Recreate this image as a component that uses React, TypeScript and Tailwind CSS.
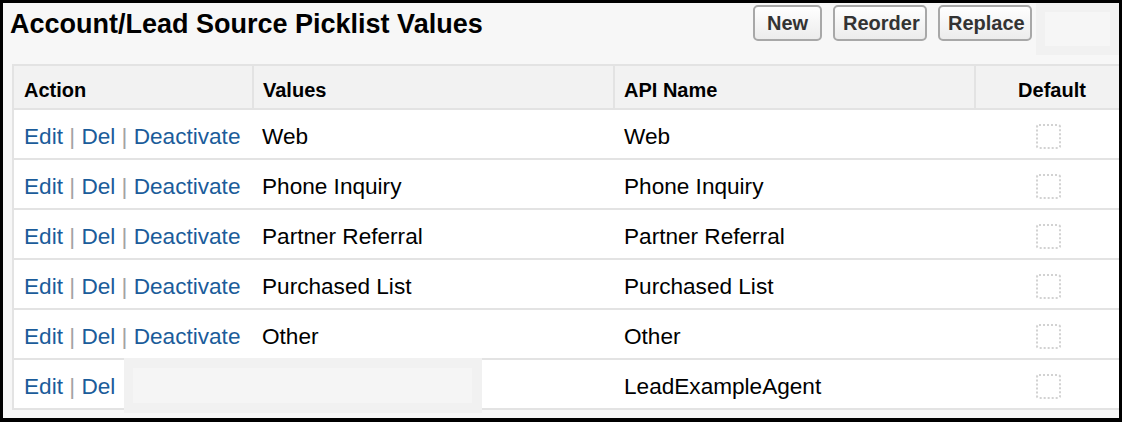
import React from "react";

type Row = { value: string; api: string; deact: boolean };

const rows: Row[] = [
  { value: "Web", api: "Web", deact: true },
  { value: "Phone Inquiry", api: "Phone Inquiry", deact: true },
  { value: "Partner Referral", api: "Partner Referral", deact: true },
  { value: "Purchased List", api: "Purchased List", deact: true },
  { value: "Other", api: "Other", deact: true },
  { value: "", api: "LeadExampleAgent", deact: false },
];

function Btn({ label, w }: { label: string; w: string }) {
  return (
    <button
      className={`${w} h-[36px] rounded-[5px] border-2 border-[#a8a8a8] bg-gradient-to-b from-white to-[#ececec] px-[8px] text-[20px] font-bold leading-none text-[#333]`}
    >
      {label}
    </button>
  );
}

function Sep() {
  return <span className="text-[#a3a3a3]"> | </span>;
}

export default function App() {
  return (
    <div className="relative h-[422px] w-[1122px] overflow-hidden border-t-[3px] border-l-[3px] border-r-[3px] border-b-[4px] border-black bg-[#f7f7f7] font-['Liberation_Sans',Arial,sans-serif] text-black">
      <div className="flex items-start justify-between pl-[7px] pr-[87px]">
        <h1 className="mt-[6px] text-[27px] font-bold leading-[30px]">
          Account/Lead Source Picklist Values
        </h1>
        <div className="mt-[2px] flex gap-[11px]">
          <Btn label="New" w="w-[69px]" />
          <Btn label="Reorder" w="w-[94px]" />
          <Btn label="Replace" w="w-[94px]" />
        </div>
      </div>

      <div className="ml-[9px] mt-[23px] w-[1110px] border-x-2 border-t-2 border-[#e3e3e3] bg-white">
        <div className="grid h-[44px] grid-cols-[240px_361px_361px_1fr] border-b-2 border-[#e3e3e3] bg-[#f2f2f2] text-[20px] font-bold">
          <div className="flex items-center border-r-2 border-[#e3e3e3] pl-[10px] pt-[6px]">Action</div>
          <div className="flex items-center border-r-2 border-[#e3e3e3] pl-[9px] pt-[6px]">Values</div>
          <div className="flex items-center border-r-2 border-[#e3e3e3] pl-[9px] pt-[6px]">API Name</div>
          <div className="flex items-center justify-center pl-[8px] pt-[6px]">Default</div>
        </div>
        {rows.map((r, i) => (
          <div
            key={i}
            className="grid h-[50px] grid-cols-[240px_361px_361px_1fr] border-b-2 border-[#e3e3e3] text-[22.6px]"
          >
            <div className="flex items-center whitespace-pre pl-[10px] pt-[6px] text-[#1b5c9a]">
              <span>Edit</span>
              <Sep />
              <span>Del</span>
              {r.deact && (
                <>
                  <Sep />
                  <span>Deactivate</span>
                </>
              )}
            </div>
            <div className="flex items-center pl-[8px] pt-[6px]">{r.value}</div>
            <div className="flex items-center pl-[9px] pt-[6px]">{r.api}</div>
            <div className="flex items-center justify-center pt-[4px]">
              <div className="h-[25px] w-[25px] rounded-[3px] border-2 border-dotted border-[#d2d2d2]" />
            </div>
          </div>
        ))}
      </div>

      <div className="absolute left-[1033px] top-[-3px] h-[55px] w-[83px] bg-[#f1f1f1] pl-[9px] pt-[12px]">
        <div className="h-[34px] w-[65px] bg-[#f6f6f6]" />
      </div>

      <div className="absolute left-[121px] top-[355px] h-[55px] w-[358px] bg-[#f1f1f1] pl-[9px] pt-[10px]">
        <div className="h-[35px] w-[339px] bg-[#f5f5f5]" />
      </div>
    </div>
  );
}
